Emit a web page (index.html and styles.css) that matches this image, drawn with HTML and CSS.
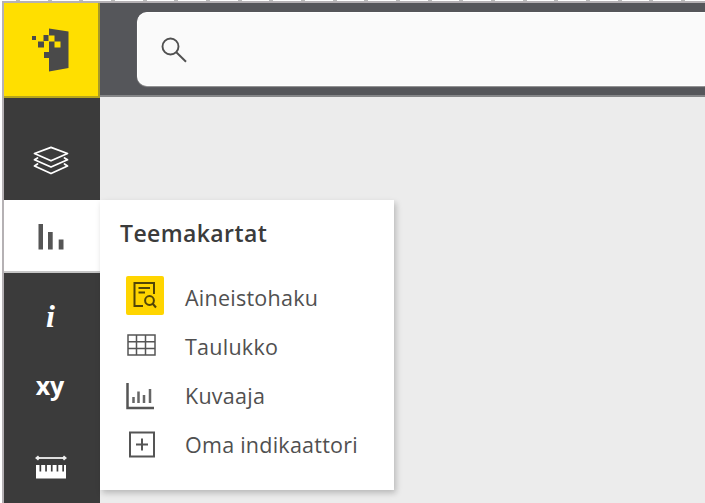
FILE: index.html
```
<!DOCTYPE html>
<html lang="fi">
<head>
<meta charset="utf-8">
<title>Teemakartat</title>
<link rel="stylesheet" href="styles.css">
</head>
<body>
<div class="ruler"></div>
<div class="app">
  <nav class="sidebar">
    <a class="logo">
      <svg width="40" height="46" viewBox="0 0 40 46">
        <path fill="#4a4a4a" d="M19 1.5 38.5 4.5V41L19 44.5Z"/>
        <path fill="#ffdf00" d="M19 8.5h5.5v6H19zM24.500 14.500h6v6h-6z"/>
        <path fill="#4a4a4a" d="M2 9h4v4H2zM13.500 8h5v6h-5zM8 14.500h6v6H8zM14 25h5v6h-5z"/>
      </svg>
    </a>
    <a class="item layers">
      <svg width="36" height="30" viewBox="0 0 36 30" fill="none" stroke="#fff" stroke-width="1.800" stroke-linejoin="round" stroke-linecap="round">
        <path d="M1.500 7.500 18 1.300 34.500 7.500 18 14.800ZM4.500 12 1.500 13.800 18 21 34.500 13.800 31.500 12M4.500 18 1.500 20 18 27.500 34.500 20 31.500 18"/>
      </svg>
    </a>
    <a class="item active">
      <svg width="27" height="26" viewBox="0 0 27 26" fill="#555"><path d="M.5 0h4.500v25.500H.5zM10 8h4.700v17.500H10zM20.700 15.500h4.800v10h-4.800z"/></svg>
    </a>
    <a class="item info">i</a>
    <a class="item coords">xy</a>
    <a class="item measure">
      <svg width="32" height="25" viewBox="0 0 32 25">
        <path d="M2 4H30" stroke="#ddd" stroke-width="2"/>
        <path fill="#eee" d="M0 4 3 1.500 5 4 3 6.500zM32 4 29 1.500 27 4 29 6.500z"/>
        <path fill="#fff" d="M1 11h3.500v6.500h1.700V11h4v6.500h1.700V11h4v6.500h1.700V11h4v6.500h1.700V11h4v6.500h1.700V11H31v13.500H1z"/>
      </svg>
    </a>
  </nav>
  <main class="main">
    <header class="topbar">
      <div class="search">
        <svg width="26" height="26" viewBox="0 0 26 26" fill="none" stroke="#505050" stroke-width="1.900"><circle cx="9.500" cy="9.500" r="8"/><path d="M15.300 15.300 25 24.800"/></svg>
      </div>
    </header>
    <section class="panel">
      <h1>Teemakartat</h1>
      <ul>
        <li>
          <span class="icon selected"><svg width="24" height="28" viewBox="0 0 24 28" fill="none" stroke="#514508" stroke-width="2">
            <path d="M10 25H1.500V2H21v11M5.500 7h11.500M5.500 11.500H12"/><circle cx="16.500" cy="19.500" r="4.400"/><path d="m19.500 22.500 3.500 4"/></svg></span>
          <span>Aineistohaku</span>
        </li>
        <li>
          <span class="icon grid"><svg width="29" height="22" viewBox="0 0 29 22" fill="none" stroke="#555" stroke-width="1.500">
            <path d="M1 1H28V21H1ZM1 7.700H28M1 14.500H28M9.500 1V21M18.500 1V21"/></svg></span>
          <span>Taulukko</span>
        </li>
        <li>
          <span class="icon chart"><svg width="28" height="27" viewBox="0 0 28 27">
            <path fill="none" stroke="#555" stroke-width="2.500" d="M1.500 0V25H28"/><path fill="none" stroke="#666" stroke-width="2.500" d="M7.500 14v6M12.500 8.500v11.500M18 12v8M24 6v14"/></svg></span>
          <span>Kuvaaja</span>
        </li>
        <li>
          <span class="icon"><svg width="26" height="27" viewBox="0 0 26 27" fill="none" stroke="#555" stroke-width="2">
            <path d="M1 1.500H25V25.500H1ZM7 13.500H19M13 7.500V19.500"/></svg></span>
          <span>Oma indikaattori</span>
        </li>
      </ul>
    </section>
  </main>
</div>
</body>
</html>
```

FILE: styles.css
```
* { box-sizing: border-box; }
body {
  margin: 0;
  width: 705px;
  height: 503px;
  overflow: hidden;
  background: #fff;
  font-family: "Open Sans", "Noto Sans", sans-serif;
}
.ruler {
  height: 1px;
  margin-left: 16px;
  background: repeating-linear-gradient(90deg, #bbb 0 4px, #fff 4px 31.67px);
}
.app {
  display: flex;
  height: 502px;
  margin-left: 2px;
  border-top: 2px solid #b5b1b4;
  border-left: 2px solid #b5b1b4;
}
.sidebar {
  display: flex;
  flex-direction: column;
  flex: none;
  width: 96px;
  background: #3b3b3b;
}
.logo {
  display: flex;
  align-items: center;
  justify-content: center;
  height: 95px;
  padding-right: 2px;
  background: #ffdf00;
  border-right: 2px solid #a99b25;
  border-bottom: 2px solid #b5a51c;
}
.item {
  display: flex;
  align-items: center;
  justify-content: center;
  flex: none;
  color: #fff;
}
.layers { height: 102px; padding: 23px 2px 0 0; }
.active {
  height: 73px;
  padding: 2px 1px 0 0;
  background: #fff;
  border-bottom: 2px solid #c6c6c6;
}
.info {
  height: 80px;
  padding: 7px 3px 0 0;
  font: italic bold 32px "Liberation Serif", serif;
}
.coords {
  height: 72px;
  padding: 0 4px 8px 0;
  font-size: 25px;
  font-weight: 700;
}
.measure { height: 78px; padding: 4px 2px 0 0; }
.main {
  flex: 1;
  min-width: 0;
  background: #ececec;
}
.topbar {
  height: 94px;
  padding: 9px 0 0 37px;
  background: #55565a;
  border-bottom: 2px solid #858688;
}
.search {
  display: flex;
  align-items: center;
  height: 74px;
  padding: 2px 0 0 23px;
  background: #fafafa;
  border: 1px solid #fff;
  border-right: 0;
  border-radius: 10px 0 0 10px;
  box-shadow: 0 1px 1px #999;
}
.panel {
  width: 294px;
  height: 290px;
  margin-top: 103px;
  padding: 15px 20px 0;
  background: #fff;
  box-shadow: 2px 3px 6px rgba(0, 0, 0, .22);
}
h1 {
  margin: 0;
  color: #3b3b3b;
  font-size: 23px;
  font-weight: 600;
  line-height: 36px;
  letter-spacing: .4px;
}
ul {
  margin: 22px 0 0;
  padding: 0;
  list-style: none;
}
li {
  display: flex;
  align-items: center;
  height: 49px;
  color: #505050;
  font-size: 21.500px;
  letter-spacing: .25px;
  white-space: nowrap;
}
.icon {
  display: flex;
  align-items: center;
  justify-content: center;
  width: 44px;
  margin-right: 21px;
}
.selected {
  width: 38px;
  height: 39px;
  margin: -5px 21px 0 6px;
  padding-right: 1px;
  background: #ffd500;
  border-radius: 2px;
}
.grid { padding: 0 1px 3px 0; }
.chart { padding: 1px 4px 0 0; }
```
